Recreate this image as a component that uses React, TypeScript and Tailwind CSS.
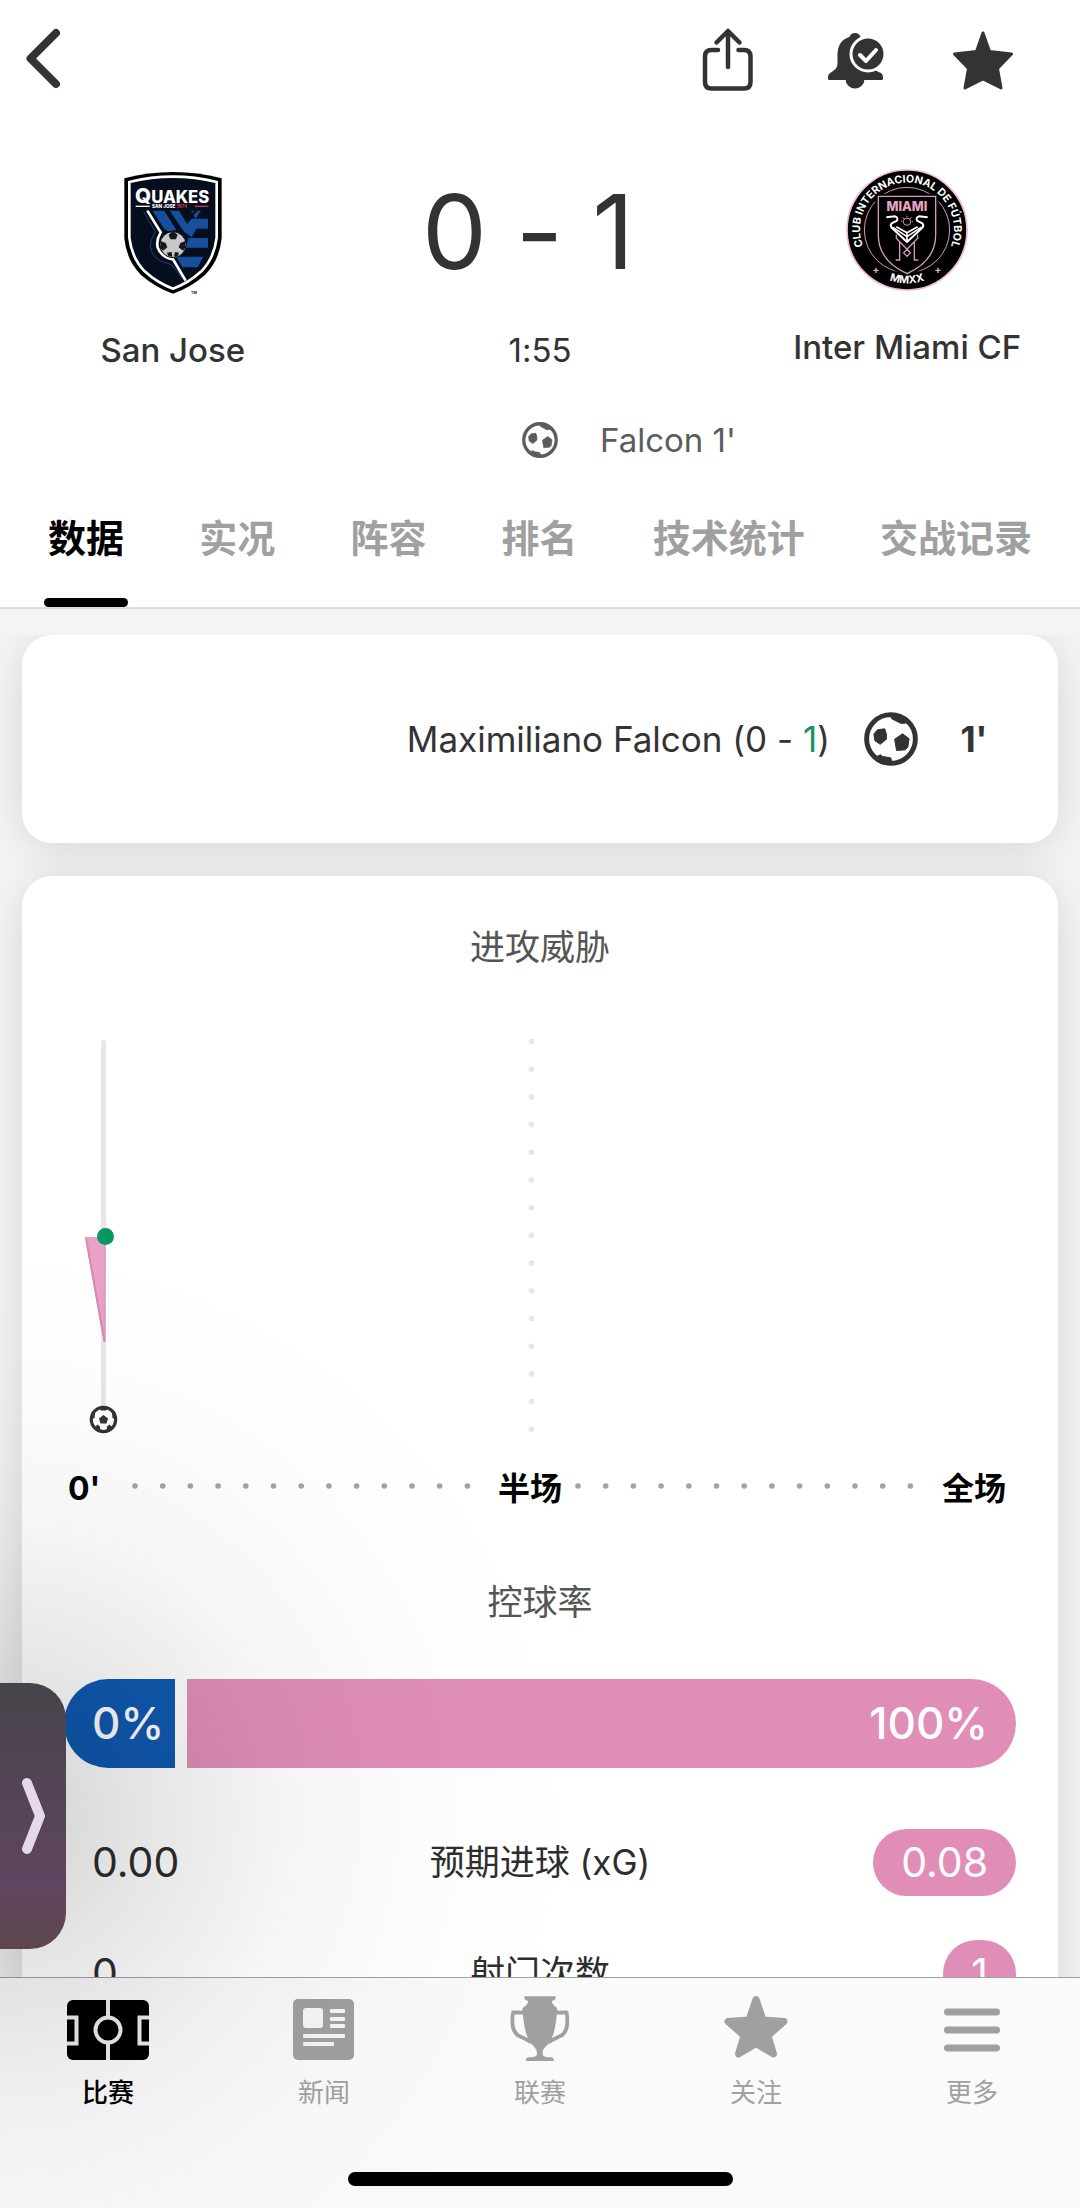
import React from "react";

const INK = "#333333";
const PINK = "#e08eb8";

function QuakesCrest() {
  return (
    <svg viewBox="44 27 300 375" className="h-[125px] w-[100px]" role="img" aria-label="San Jose">
      <path d="M48 55Q194 17 340 55V235Q334 300 290 345Q245 384 194 401Q143 384 98 345Q54 300 48 235Z" fill="#000" />
      <path d="M63 66Q194 34 325 66V233Q318 294 279 334Q240 370 194 386Q148 370 109 334Q70 294 63 233Z" fill="#060d1c" stroke="#fff" strokeWidth="8" />
      <g fill="#174f9f">
        <path d="M133 152H168L204 210L180 214L168 208Z" />
        <path d="M184 152H212L236 192L250 176H299V206H264L250 232L228 216Z" />
        <path d="M248 152H278L262 176Z" />
        <path d="M240 234H299V263H232Z" />
        <path d="M204 290H285L268 322H222Z" />
      </g>
      <path d="M236 178L264 152" stroke="#060d1c" strokeWidth="7" />
      <path d="M106 155L141 215Q126 238 126 258Q130 296 170 308Q192 306 222 356" fill="none" stroke="#24406f" strokeWidth="3" />
      <path d="M117 152L157 217Q143 240 148 262Q158 292 194 298L232 362" fill="none" stroke="#fff" strokeWidth="8" />
      <circle cx="194" cy="254" r="39" fill="#c9c7c8" stroke="#111" strokeWidth="3" />
      <g fill="#15171c">
        <path d="M181 224L194 214L208 224L203 238H186Z" />
        <path d="M158 244L172 249L177 262L164 272L157 264Z" />
        <path d="M230 244L216 249L211 262L224 272L231 264Z" />
        <path d="M176 278L190 276L192 290L180 289Z" />
        <path d="M212 278L200 276L197 290L208 289Z" />
      </g>
      <text x="80" y="128" fill="#fff" fontFamily="Inter, sans-serif" fontWeight="800" fontSize="62">
        Q<tspan fontSize="50">UAKES</tspan>
      </text>
      <path d="M82 139H124" stroke="#fff" strokeWidth="4" />
      <path d="M259 139H300" stroke="#c8333c" strokeWidth="4" />
      <text x="131" y="144" fill="#fff" fontFamily="Inter, sans-serif" fontWeight="800" fontSize="14">
        SAN JOSE <tspan fill="#c8333c">1974</tspan>
      </text>
      <text x="248" y="401" fill="#222" fontFamily="Inter, sans-serif" fontWeight="700" fontSize="11">TM</text>
    </svg>
  );
}

function MiamiCrest() {
  return (
    <svg viewBox="19 27 366 366" className="size-[122px]" role="img" aria-label="Inter Miami CF">
      <defs>
        <path id="ring-top" d="M86.900 290A141 141 0 1 1 317.100 290" />
        <path id="ring-bottom" d="M110 341A160 160 0 0 0 294 341" />
      </defs>
      <circle cx="202" cy="210" r="180" fill="#000" stroke="#efb9cf" strokeWidth="5" />
      <circle cx="202" cy="210" r="128" fill="none" stroke="#d79ab8" strokeWidth="3" />
      <path d="M112 106H292V225C292 292 250 324 202 346C154 324 112 292 112 225Z" fill="#000" stroke="#000" strokeWidth="10" />
      <path d="M116 109H288V225C288 288 248 320 202 341C156 320 116 288 116 225Z" fill="#000" stroke="#d79ab8" strokeWidth="4" />
      <text fill="#fff" fontFamily="Inter, sans-serif" fontWeight="700" fontSize="32" textAnchor="middle">
        <textPath href="#ring-top" startOffset="50%">CLUB INTERNACIONAL DE FÚTBOL</textPath>
      </text>
      <text fill="#fff" fontFamily="Inter, sans-serif" fontWeight="700" fontSize="32" textAnchor="middle">
        <textPath href="#ring-bottom" startOffset="50%">MMXX</textPath>
      </text>
      <text x="202" y="152" fill="#e8a3c3" fontFamily="Inter, sans-serif" fontWeight="800" fontSize="38" textAnchor="middle">MIAMI</text>
      <circle cx="202" cy="185" r="11" fill="none" stroke="#d79ab8" strokeWidth="3" />
      <path d="M202 167V171M189 172L192 176M215 172L212 176M184 184H188M216 184H220" stroke="#d79ab8" strokeWidth="3" />
      <g fill="none" stroke="#fff" strokeLinejoin="round">
        <path d="M140 172L166 169Q176 172 172 182L156 190Q150 196 157 204L202 246L247 204Q254 196 248 190L232 182Q228 172 238 169L264 172" strokeWidth="6" />
        <path d="M160 202L202 230L244 202M170 200L202 218L234 200M202 218V244" strokeWidth="5" />
      </g>
      <g fill="none" stroke="#d79ab8" strokeWidth="4">
        <path d="M170 224V235L202 268L234 235V224M180 246V300H168M224 246V300H236" />
        <path d="M202 268L212 278L202 289L192 278Z" />
      </g>
      <path d="M109 323V339M101 331H117M295 323V339M287 331H303" stroke="#e8a3c3" strokeWidth="4" />
    </svg>
  );
}

function SoccerBall({ className }: { className: string }) {
  return (
    <svg viewBox="27 33 164 164" className={className} aria-hidden="true">
      <circle cx="109" cy="115" r="74" fill="#fff" stroke="currentColor" strokeWidth="15" />
      <g fill="currentColor" stroke="currentColor" strokeLinejoin="round" strokeWidth="3">
        <path d="M57 100L68 87L90 84L95 100L95 116L76 131L60 120Z" />
        <path d="M120 116L144 99L164 114L160 140L152 148L126 150Z" />
        <path d="M104 40L112 54L140 68L160 66L152 50Z" />
        <path d="M58 176L66 168L77 163L83 168L108 172L112 184L106 192L80 190Z" />
      </g>
    </svg>
  );
}

function ShareIcon() {
  return (
    <svg viewBox="0 0 64 64" className="size-16" fill="none" stroke={INK} strokeWidth="4.500" strokeLinecap="round" strokeLinejoin="round" aria-hidden="true">
      <path d="M22 23H15.500Q9 23 9 29.500V55Q9 61.500 15.500 61.500H48Q54.500 61.500 54.500 55V29.500Q54.500 23 48 23H42.500" />
      <path d="M32 40V5M20.500 15.500L32 4L43.500 15.500" />
    </svg>
  );
}

function BellIcon() {
  return (
    <svg viewBox="0 0 64 64" className="size-16" aria-hidden="true">
      <path fill={INK} d="M31 6C34 6 36 8 36.500 10C44 12 49 18 49 28V38C49 42 52 44 56 45.500Q59 47 59 50V51.500Q59 53 57.500 53H5.500Q4 53 4 51.500V50Q4 47 7 45.500C12 42 13.500 41 13.500 35V28C13.500 18 18 12 25.500 10C26 8 28 6 31 6Z" />
      <path fill={INK} d="M21.500 52A9.500 9.500 0 0 0 40.500 52Z" />
      <circle cx="44" cy="27" r="17" fill={INK} stroke="#fff" strokeWidth="3" />
      <path d="M36 28L42 34L52 23" fill="none" stroke="#fff" strokeWidth="4" strokeLinecap="round" strokeLinejoin="round" />
    </svg>
  );
}

function StarIcon() {
  return (
    <svg viewBox="0 0 64 64" className="size-16" aria-hidden="true">
      <path fill={INK} stroke={INK} strokeWidth="3" strokeLinejoin="round" d="M31 6L37.500 24.500L59.500 27L45.500 41.500L49 61L31 52L13 61L16.500 41.500L2.500 27L24.500 24.500Z" />
    </svg>
  );
}

function PitchIcon() {
  return (
    <svg viewBox="0 0 82 64" className="h-16 w-[82px]" aria-hidden="true">
      <rect y="3" width="82" height="60" rx="6" fill="#000" />
      <g fill="none" stroke="#ececec" strokeWidth="4">
        <path d="M41 3V63M0 20.500H9.500V46.500H0M82 20.500H72.500V46.500H82" />
        <circle cx="41" cy="33" r="12.500" fill="#000" />
      </g>
    </svg>
  );
}

function NewsIcon() {
  return (
    <svg viewBox="0 0 64 64" className="size-16" aria-hidden="true">
      <rect x="1" y="2" width="61" height="61" rx="5" fill="currentColor" />
      <g fill="#f6f6f6">
        <rect x="11" y="11" width="20" height="20" rx="3" />
        <rect x="38" y="12" width="15" height="4" rx="1" />
        <rect x="38" y="20" width="15" height="4" rx="1" />
        <rect x="38" y="27" width="15" height="4" rx="1" />
        <rect x="11" y="37" width="42" height="4" rx="1" />
        <rect x="11" y="45" width="31" height="4" rx="1" />
      </g>
    </svg>
  );
}

function TrophyIcon() {
  return (
    <svg viewBox="22 24 192 192" className="size-16 overflow-visible" aria-hidden="true">
      <path fill="currentColor" d="M71 22H165Q167 35 153 36Q156 49 168 56Q172 60 168 80Q163 130 151 152Q142 168 130 178Q124 186 127 199Q130 205 150 205Q160 206 160 216H75Q75 206 86 205Q104 205 108 199Q111 186 104 178Q94 168 84 152Q72 130 67 80Q63 60 67 56Q80 49 83 36Q69 35 71 22Z" />
      <path fill="none" stroke="currentColor" strokeWidth="11" strokeLinejoin="round" d="M70 71L37 70C32 108 36 126 50 138Q76 150 92 160M166 71L198 70C203 108 199 126 185 138Q159 150 143 160" />
    </svg>
  );
}

function FollowIcon() {
  return (
    <svg viewBox="0 0 64 64" className="size-16 overflow-visible" aria-hidden="true">
      <path fill="currentColor" stroke="currentColor" strokeWidth="7" strokeLinejoin="round" d="M32 2.500L39 23L60 24.500L44 38.500L49.500 57L32 46.500L14.500 57L20 38.500L4 24.500L25 23Z" />
    </svg>
  );
}

function MoreIcon() {
  return (
    <svg viewBox="0 0 64 64" className="size-16" stroke="currentColor" strokeWidth="7" strokeLinecap="round" aria-hidden="true">
      <path d="M7.500 15H56.500M7.500 33H56.500M7.500 51H56.500" />
    </svg>
  );
}

const halfTimeDots = Array.from({ length: 15 }, (_, i) => 7.5 + i * 27.7);

function ThreatChart() {
  return (
    <svg viewBox="0 0 952 402" className="mt-16 w-full" role="img" aria-label="进攻威胁">
      {halfTimeDots.map((y) => (
        <circle key={y} cx="467.500" cy={y} r="2.800" fill="#e6e6e6" />
      ))}
      <path d="M39.500 8.500V375" stroke="#e7e7e7" strokeWidth="5" strokeLinecap="round" />
      <path d="M21 203H41.500V308H39.500Z" fill="#e9a1c6" />
      <path d="M40 203H41.500V308H39.500Z" fill="#dc9dbf" />
      <path d="M22 204L40.500 307" stroke="#d78bb3" strokeWidth="2" />
      <circle cx="41.500" cy="202.500" r="8.500" fill="#069861" />
      <circle cx="39.500" cy="385.500" r="12.200" fill="#fff" stroke={INK} strokeWidth="3.200" />
      <g fill={INK}>
        <path d="M39.500 381L44 384.500L42.500 389.500H36.500L35 384.500Z" />
        <path d="M34.500 373.500H44.500L42 376.500H37Z" />
        <path d="M27 385.500L28 377L31 379.500L30.500 384Z" />
        <path d="M52 385.500L51 377L48 379.500L48.500 384Z" />
        <path d="M30 394L33.500 390.500L36 392.500L36.500 397Z" />
        <path d="M49 394L45.500 390.500L43 392.500L42.500 397Z" />
      </g>
    </svg>
  );
}

function AxisDots({ start }: { start: number }) {
  return (
    <svg className="mb-1.5 h-[6px] w-full" aria-hidden="true">
      <line x1={start} x2="95%" y1="3" y2="3" stroke="#a3a3a3" strokeWidth="5.600" strokeLinecap="round" strokeDasharray="0.010 27.690" />
    </svg>
  );
}

const tabs = ["数据", "实况", "阵容", "排名", "技术统计", "交战记录"];

const stats = [
  { label: "预期进球 (xG)", home: "0.00", away: "0.08" },
  { label: "射门次数", home: "0", away: "1" },
];

const navItems = [
  { label: "比赛", icon: <PitchIcon />, active: true },
  { label: "新闻", icon: <NewsIcon />, active: false },
  { label: "联赛", icon: <TrophyIcon />, active: false },
  { label: "关注", icon: <FollowIcon />, active: false },
  { label: "更多", icon: <MoreIcon />, active: false },
];

export default function App() {
  return (
    <div className="relative flex h-screen flex-col overflow-hidden bg-white font-['Inter','Noto_Sans_CJK_SC',sans-serif] text-[#333333] [font-feature-settings:'calt'_0]">
      <header className="shrink-0">
        <div className="flex h-[118px] items-center justify-between pr-16 pl-3">
          <button type="button" aria-label="返回">
            <svg viewBox="0 0 64 64" className="size-16" fill="none" stroke={INK} strokeWidth="8" strokeLinecap="round" strokeLinejoin="round" aria-hidden="true">
              <path d="M44 6L18.500 31.500L44 57" />
            </svg>
          </button>
          <div className="flex gap-16">
            <button type="button" aria-label="分享"><ShareIcon /></button>
            <button type="button" aria-label="通知"><BellIcon /></button>
            <button type="button" aria-label="收藏"><StarIcon /></button>
          </div>
        </div>

        <div className="grid grid-cols-[32%_1fr_32%] pt-[51px]">
          <div className="flex flex-col items-center">
            <QuakesCrest />
            <h2 className="mt-8 text-[33px] leading-[48px] font-medium">San Jose</h2>
          </div>
          <div className="flex flex-col items-center">
            <p className="pr-6 text-[103px] leading-[125px] whitespace-nowrap">0 - 1</p>
            <p className="mt-8 text-[33px] leading-[48px]">1:55</p>
          </div>
          <div className="flex flex-col items-center">
            <MiamiCrest />
            <h2 className="mt-8 text-[33px] leading-[48px] font-medium whitespace-nowrap">Inter Miami CF</h2>
          </div>
        </div>

        <div className="mt-[42px] grid grid-cols-[1fr_36px_1fr] items-center gap-x-[42px] text-[#5c5c5c]">
          <SoccerBall className="col-start-2 size-9" />
          <p className="text-[33px] leading-[48px]">Falcon 1'</p>
        </div>

        <nav className="mt-[50px] flex justify-between border-b-2 border-[#dedede] px-12" aria-label="比赛详情">
          {tabs.map((tab, i) => (
            <button
              key={tab}
              type="button"
              className={
                i === 0
                  ? "relative pb-[45px] text-[38px] leading-[48px] font-bold text-black"
                  : "relative pb-[45px] text-[38px] leading-[48px] font-bold text-[#a0a0a0]"
              }
            >
              {tab}
              {i === 0 && <span className="absolute -inset-x-1 bottom-0 h-[9px] rounded-full bg-black" />}
            </button>
          ))}
        </nav>
        <div className="h-[26px] bg-[#f4f4f4]" />
      </header>

      <main className="flex min-h-0 flex-1 flex-col gap-[33px] overflow-hidden bg-[#f4f4f4] px-[22px]">
        <section className="flex shrink-0 items-center justify-end rounded-[30px] bg-white py-[74px] pr-7 shadow-[0_6px_44px_rgba(0,0,0,0.12)]">
          <p className="mr-[34px] text-[35px] leading-[60px]">
            Maximiliano Falcon (0 - <span className="text-[#169263]">1</span>)
          </p>
          <SoccerBall className="size-[54px]" />
          <span className="w-28 text-center text-[35px] leading-[60px] font-bold">1'</span>
        </section>

        <section className="shrink-0 rounded-t-[30px] bg-white px-[42px] pt-12 pb-24 shadow-[0_6px_44px_rgba(0,0,0,0.12)]">
          <h3 className="text-center text-[35px] leading-[46px] text-[#555555]">进攻威胁</h3>
          <ThreatChart />
          <div className="mt-[30px] grid grid-cols-[54px_1fr_76px_1fr_74px] items-center text-[32px] leading-[46px] font-bold text-black">
            <span className="pl-1">0'</span>
            <AxisDots start={17} />
            <span className="text-center">半场</span>
            <AxisDots start={10} />
            <span>全场</span>
          </div>

          <h3 className="mt-[67px] text-center text-[35px] leading-[46px] text-[#555555]">控球率</h3>
          <div className="mt-[54px] flex gap-3 text-[44px] leading-[89px] font-medium text-white">
            <div className="rounded-l-[45px] bg-[#0f59b0] pr-[11px] pl-7">0%</div>
            <div className="flex-1 rounded-r-[45px] bg-[#e08eb8] pr-7 text-right">100%</div>
          </div>

          <div className="mt-[61px] flex flex-col gap-11">
            {stats.map((row) => (
              <div key={row.label} className="grid grid-cols-3 items-center text-[41px] leading-[67px] text-[#2d2d2d]">
                <span className="pl-7">{row.home}</span>
                <span className="text-center text-[35px]">{row.label}</span>
                <span className="justify-self-end rounded-full px-7 text-white" style={{ backgroundColor: PINK }}>
                  {row.away}
                </span>
              </div>
            ))}
          </div>
        </section>
      </main>

      <footer className="shrink-0 border-t border-[#a0a0a0] bg-[#fbfafb] pt-[19px] pb-[22px]">
        <nav className="grid grid-cols-5" aria-label="主导航">
          {navItems.map((item) => (
            <a
              key={item.label}
              href="#"
              className={
                item.active
                  ? "flex flex-col items-center gap-3 text-[26px] leading-[40px] font-medium text-black"
                  : "flex flex-col items-center gap-3 text-[26px] leading-[40px] text-[#a0a0a0]"
              }
            >
              {item.icon}
              {item.label}
            </a>
          ))}
        </nav>
        <div className="mx-auto mt-[59px] h-[14px] w-[385px] rounded-full bg-black" />
      </footer>

      <div className="pointer-events-none absolute bottom-[-189px] left-[-580px] size-[1160px] bg-[radial-gradient(circle_580px,rgba(0,0,0,0.18),rgba(0,0,0,0.1)_25%,rgba(0,0,0,0.04)_50%,rgba(0,0,0,0.01)_75%,transparent)]" />
      <button
        type="button"
        aria-label="展开侧栏"
        className="absolute bottom-[259px] left-0 flex h-[266px] w-[66px] items-center justify-center rounded-r-[36px] bg-linear-to-b from-[#464349] via-[#5f4560] via-75% to-[#5c474d]"
      >
        <svg viewBox="0 0 32 84" className="h-[84px] w-8" fill="none" stroke="#e6d8ec" strokeWidth="10" strokeLinecap="round" strokeLinejoin="round" aria-hidden="true">
          <path d="M10 9L23 42L10 75" />
        </svg>
      </button>
    </div>
  );
}
